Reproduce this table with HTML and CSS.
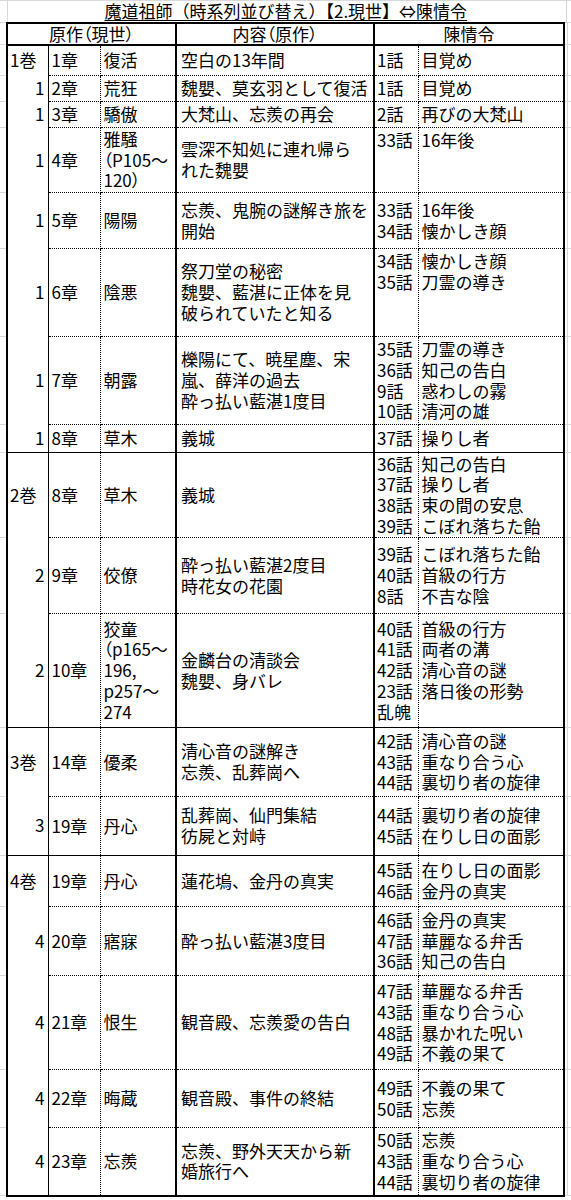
FILE: index.html
```html
<!DOCTYPE html>
<html lang="ja">
<head>
<meta charset="utf-8">
<title>魔道祖師 時系列</title>
<link rel="stylesheet" href="styles.css">
</head>
<body>
<table class="sheet">
<colgroup>
<col class="c-gl"><col class="c-vol"><col class="c-ch"><col class="c-ti"><col class="c-desc"><col class="c-ep"><col class="c-et"><col class="c-gr">
</colgroup>
<tr class="title-row"><td class="gl"></td><td colspan="6" class="title"><span class="title-text">魔道祖師（時系列並び替え）【2.現世】⇔陳情令</span></td><td class="gr"></td></tr>
<tr class="head"><td class="gl"></td><th colspan="3">原作<span class="pp">（</span>現世<span class="pp">）</span></th><th>内容<span class="pp">（</span>原作<span class="pp">）</span></th><th colspan="2">陳情令</th><td class="gr"></td></tr>

<tr class="h31"><td class="gl"></td><td class="vol">1巻</td><td class="ch">1章</td><td class="ti">復活</td><td class="desc">空白の13年間</td><td class="ep">1話</td><td class="et">目覚め</td><td class="gr"></td></tr>
<tr class="h26"><td class="gl"></td><td class="vol num">1</td><td class="ch">2章</td><td class="ti">荒狂</td><td class="desc">魏嬰、莫玄羽として復活</td><td class="ep">1話</td><td class="et">目覚め</td><td class="gr"></td></tr>
<tr class="h26"><td class="gl"></td><td class="vol num">1</td><td class="ch">3章</td><td class="ti">驕傲</td><td class="desc">大梵山、忘羨の再会</td><td class="ep">2話</td><td class="et">再びの大梵山</td><td class="gr"></td></tr>
<tr class="h65"><td class="gl"></td><td class="vol num">1</td><td class="ch">4章</td><td class="ti pp">雅騒<br>（P105～<br>120）</td><td class="desc">雲深不知処に連れ帰ら<br>れた魏嬰</td><td class="ep top">33話</td><td class="et top">16年後</td><td class="gr"></td></tr>
<tr class="h56"><td class="gl"></td><td class="vol num">1</td><td class="ch">5章</td><td class="ti">陽陽</td><td class="desc">忘羨、鬼腕の謎解き旅を<br>開始</td><td class="ep">33話<br>34話</td><td class="et">16年後<br>懐かしき顔</td><td class="gr"></td></tr>
<tr class="h88"><td class="gl"></td><td class="vol num">1</td><td class="ch">6章</td><td class="ti">陰悪</td><td class="desc">祭刀堂の秘密<br>魏嬰、藍湛に正体を見<br>破られていたと知る</td><td class="ep top">34話<br>35話</td><td class="et top">懐かしき顔<br>刀霊の導き</td><td class="gr"></td></tr>
<tr class="h88"><td class="gl"></td><td class="vol num">1</td><td class="ch">7章</td><td class="ti">朝露</td><td class="desc">櫟陽にて、暁星塵、宋<br>嵐、薛洋の過去<br>酔っ払い藍湛1度目</td><td class="ep">35話<br>36話<br>9話<br>10話</td><td class="et">刀霊の導き<br>知己の告白<br>惑わしの霧<br>清河の雄</td><td class="gr"></td></tr>
<tr class="h28 end"><td class="gl"></td><td class="vol num">1</td><td class="ch">8章</td><td class="ti">草木</td><td class="desc">義城</td><td class="ep">37話</td><td class="et">操りし者</td><td class="gr"></td></tr>

<tr class="h85"><td class="gl"></td><td class="vol">2巻</td><td class="ch">8章</td><td class="ti">草木</td><td class="desc">義城</td><td class="ep">36話<br>37話<br>38話<br>39話</td><td class="et">知己の告白<br>操りし者<br>束の間の安息<br>こぼれ落ちた飴</td><td class="gr"></td></tr>
<tr class="h76"><td class="gl"></td><td class="vol num">2</td><td class="ch">9章</td><td class="ti">佼僚</td><td class="desc">酔っ払い藍湛2度目<br>時花女の花園</td><td class="ep">39話<br>40話<br>8話</td><td class="et">こぼれ落ちた飴<br>首級の行方<br>不吉な陰</td><td class="gr"></td></tr>
<tr class="h114 end"><td class="gl"></td><td class="vol num">2</td><td class="ch">10章</td><td class="ti pp">狡童<br>（p165～<br>196,<br>p257～<br>274</td><td class="desc">金麟台の清談会<br>魏嬰、身バレ</td><td class="ep">40話<br>41話<br>42話<br>23話<br>乱魄</td><td class="et">首級の行方<br>両者の溝<br>清心音の謎<br>落日後の形勢<br>&nbsp;</td><td class="gr"></td></tr>

<tr class="h69"><td class="gl"></td><td class="vol">3巻</td><td class="ch">14章</td><td class="ti">優柔</td><td class="desc">清心音の謎解き<br>忘羨、乱葬崗へ</td><td class="ep">42話<br>43話<br>44話</td><td class="et">清心音の謎<br>重なり合う心<br>裏切り者の旋律</td><td class="gr"></td></tr>
<tr class="h59 end"><td class="gl"></td><td class="vol num">3</td><td class="ch">19章</td><td class="ti">丹心</td><td class="desc">乱葬崗、仙門集結<br>彷屍と対峙</td><td class="ep">44話<br>45話</td><td class="et">裏切り者の旋律<br>在りし日の面影</td><td class="gr"></td></tr>

<tr class="h51"><td class="gl"></td><td class="vol">4巻</td><td class="ch">19章</td><td class="ti">丹心</td><td class="desc">蓮花塢、金丹の真実</td><td class="ep">45話<br>46話</td><td class="et">在りし日の面影<br>金丹の真実</td><td class="gr"></td></tr>
<tr class="h69"><td class="gl"></td><td class="vol num">4</td><td class="ch">20章</td><td class="ti">寤寐</td><td class="desc">酔っ払い藍湛3度目</td><td class="ep">46話<br>47話<br>36話</td><td class="et">金丹の真実<br>華麗なる弁舌<br>知己の告白</td><td class="gr"></td></tr>
<tr class="h94"><td class="gl"></td><td class="vol num">4</td><td class="ch">21章</td><td class="ti">恨生</td><td class="desc">観音殿、忘羨愛の告白</td><td class="ep">47話<br>43話<br>48話<br>49話</td><td class="et">華麗なる弁舌<br>重なり合う心<br>暴かれた呪い<br>不義の果て</td><td class="gr"></td></tr>
<tr class="h58"><td class="gl"></td><td class="vol num">4</td><td class="ch">22章</td><td class="ti">晦蔵</td><td class="desc">観音殿、事件の終結</td><td class="ep">49話<br>50話</td><td class="et">不義の果て<br>忘羨</td><td class="gr"></td></tr>
<tr class="h68 last"><td class="gl"></td><td class="vol num">4</td><td class="ch">23章</td><td class="ti">忘羨</td><td class="desc">忘羨、野外天天から新<br>婚旅行へ</td><td class="ep">50話<br>43話<br>44話</td><td class="et">忘羨<br>重なり合う心<br>裏切り者の旋律</td><td class="gr"></td></tr>
</table>
</body>
</html>
```

FILE: styles.css
```css
html, body {
  margin: 0;
  padding: 0;
  background: #ffffff;
}

body {
  font-family: "Noto Sans CJK JP", "Noto Sans", sans-serif;
  font-size: 17px;
  color: #000000;
}

.sheet {
  width: 571px;
  border-collapse: collapse;
  table-layout: fixed;
}

.c-gl { width: 7px; }
.c-vol { width: 41px; }
.c-ch { width: 52px; }
.c-ti { width: 76px; }
.c-desc { width: 198px; }
.c-ep { width: 44px; }
.c-et { width: 146px; }
.c-gr { width: 7px; }

.sheet td,
.sheet th {
  padding: 0;
  line-height: 20.7px;
  white-space: nowrap;
  vertical-align: middle;
  text-align: left;
  font-weight: 400;
}

/* proportional punctuation, like the sheet's P-gothic parentheses */
.pp {
  font-feature-settings: "palt";
}

/* grid lines outside the bordered table */
.sheet .gl {
  border-bottom: 1px solid #d9d9d9;
}

.sheet .gr {
  border-bottom: 1px solid #d9d9d9;
  background: linear-gradient(#d4d4d4, #d4d4d4) no-repeat 2px 0 / 1px 100%;
}

.title-row {
  height: 22px;
}

.title-row td {
  border-top: 1px solid #d9d9d9;
}

.title-row .gl {
  border-right: 1px solid #d9d9d9;
}

.sheet .title {
  text-align: center;
  border-bottom: 2px solid #000;
  line-height: 20px;
}

.title-text {
  text-decoration: underline;
  text-underline-offset: 2px;
  text-decoration-thickness: 1px;
}

.head {
  height: 22px;
}

.sheet .head th {
  text-align: center;
  border: 2px solid #000;
  line-height: 20px;
}

/* body cells */
.sheet .vol {
  border-left: 2px solid #000;
  border-right: 1px solid #000;
  padding: 0 3px 0 2px;
}

.sheet .vol.num {
  text-align: right;
}

.sheet .ch {
  border-right: 1px dotted #000;
  border-bottom: 1px dotted #000;
  padding-left: 3px;
}

.sheet .ti {
  border-right: 2px solid #000;
  border-bottom: 1px dotted #000;
  padding-left: 3px;
}

.sheet .desc {
  border-right: 2px solid #000;
  border-bottom: 1px dotted #000;
  padding-left: 4px;
}

.sheet .ep {
  border-right: 1px dotted #000;
  border-bottom: 1px dotted #000;
  padding-left: 2px;
}

.sheet .et {
  border-right: 2px solid #000;
  border-bottom: 1px dotted #000;
  padding-left: 3px;
}

.sheet .top {
  vertical-align: top;
  padding-top: 2px;
}

.sheet .end .vol,
.sheet .end .ch,
.sheet .end .ti,
.sheet .end .desc,
.sheet .end .ep,
.sheet .end .et {
  border-bottom: 1px solid #000;
}

.sheet .last .vol,
.sheet .last .ch,
.sheet .last .ti,
.sheet .last .desc,
.sheet .last .ep,
.sheet .last .et {
  border-bottom: 2px solid #000;
}

/* row heights */
.h26 { height: 26px; }
.h28 { height: 28px; }
.h31 { height: 31px; }
.h51 { height: 51px; }
.h56 { height: 56px; }
.h58 { height: 58px; }
.h59 { height: 59px; }
.h65 { height: 65px; }
.h68 { height: 68px; }
.h69 { height: 69px; }
.h76 { height: 76px; }
.h85 { height: 85px; }
.h88 { height: 88px; }
.h94 { height: 94px; }
.h114 { height: 114px; }
```
